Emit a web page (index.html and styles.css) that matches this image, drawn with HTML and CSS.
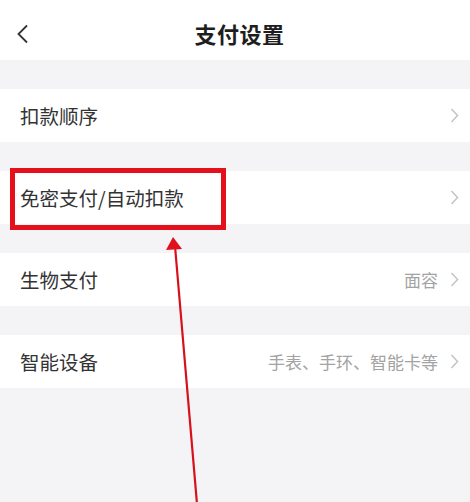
FILE: index.html
```html
<!DOCTYPE html>
<html lang="zh">
<head>
<meta charset="utf-8">
<link rel="stylesheet" href="styles.css">
</head>
<body>
<div class="page">
  <header class="nav">
    <svg class="back" width="14" height="20" viewBox="0 0 14 20"><path d="M11 1.5 L2.5 10 L11 18.5" fill="none" stroke="#333" stroke-width="1.8"/></svg>
    <h1 class="title">支付设置</h1>
  </header>
  <div class="list">
    <div class="row"><span class="label">扣款顺序</span><span class="right"><svg class="chev" width="9" height="15" viewBox="0 0 9 15"><path d="M1.5 1 L7.5 7.5 L1.5 14" fill="none" stroke="#c4c4c4" stroke-width="1.5"/></svg></span></div>
    <div class="row"><span class="label">免密支付/自动扣款</span><span class="right"><svg class="chev" width="9" height="15" viewBox="0 0 9 15"><path d="M1.5 1 L7.5 7.5 L1.5 14" fill="none" stroke="#c4c4c4" stroke-width="1.5"/></svg></span></div>
    <div class="row"><span class="label">生物支付</span><span class="right"><span class="value">面容</span><svg class="chev" width="9" height="15" viewBox="0 0 9 15"><path d="M1.5 1 L7.5 7.5 L1.5 14" fill="none" stroke="#c4c4c4" stroke-width="1.5"/></svg></span></div>
    <div class="row"><span class="label">智能设备</span><span class="right"><span class="value">手表、手环、智能卡等</span><svg class="chev" width="9" height="15" viewBox="0 0 9 15"><path d="M1.5 1 L7.5 7.5 L1.5 14" fill="none" stroke="#c4c4c4" stroke-width="1.5"/></svg></span></div>
  </div>
  <div class="highlight"></div>
  <svg class="arrow" width="470" height="502" viewBox="0 0 470 502">
    <line x1="175" y1="246" x2="197" y2="504" stroke="#d7101c" stroke-width="2.2"/>
    <polygon points="173,237 166,250 182,249" fill="#e0101c"/>
  </svg>
</div>
</body>
</html>
```
FILE: styles.css
```css
html, body {
  margin: 0;
  padding: 0;
  background: #f4f4f6;
}
.page {
  position: relative;
  width: 470px;
  height: 502px;
  overflow: hidden;
  font-family: "Noto Sans CJK SC", "Noto Sans", sans-serif;
  background: #f4f4f6;
}
.nav {
  height: 60px;
  background: #ffffff;
  display: flex;
  align-items: center;
  justify-content: center;
  position: relative;
}
.back {
  position: absolute;
  left: 16px;
  top: 24px;
}
.title {
  margin: 0;
  font-size: 22px;
  font-weight: 700;
  color: #1e1e1e;
  padding-top: 6px;
  padding-left: 9px;
  letter-spacing: 0.5px;
}
.list {
  display: flex;
  flex-direction: column;
  gap: 29px;
  padding-top: 29px;
}
.row {
  height: 53px;
  background: #ffffff;
  display: flex;
  align-items: center;
  justify-content: space-between;
  padding: 0 11px 0 20px;
}
.label {
  font-size: 19.5px;
  color: #333333;
}
.right {
  display: flex;
  align-items: center;
  gap: 12px;
}
.value {
  font-size: 17px;
  color: #a3a3a3;
}
.chev {
  display: block;
}
.highlight {
  position: absolute;
  left: 10px;
  top: 168px;
  width: 206px;
  height: 52px;
  border: 5px solid #e4101c;
}
.arrow {
  position: absolute;
  left: 0;
  top: 0;
}
```
